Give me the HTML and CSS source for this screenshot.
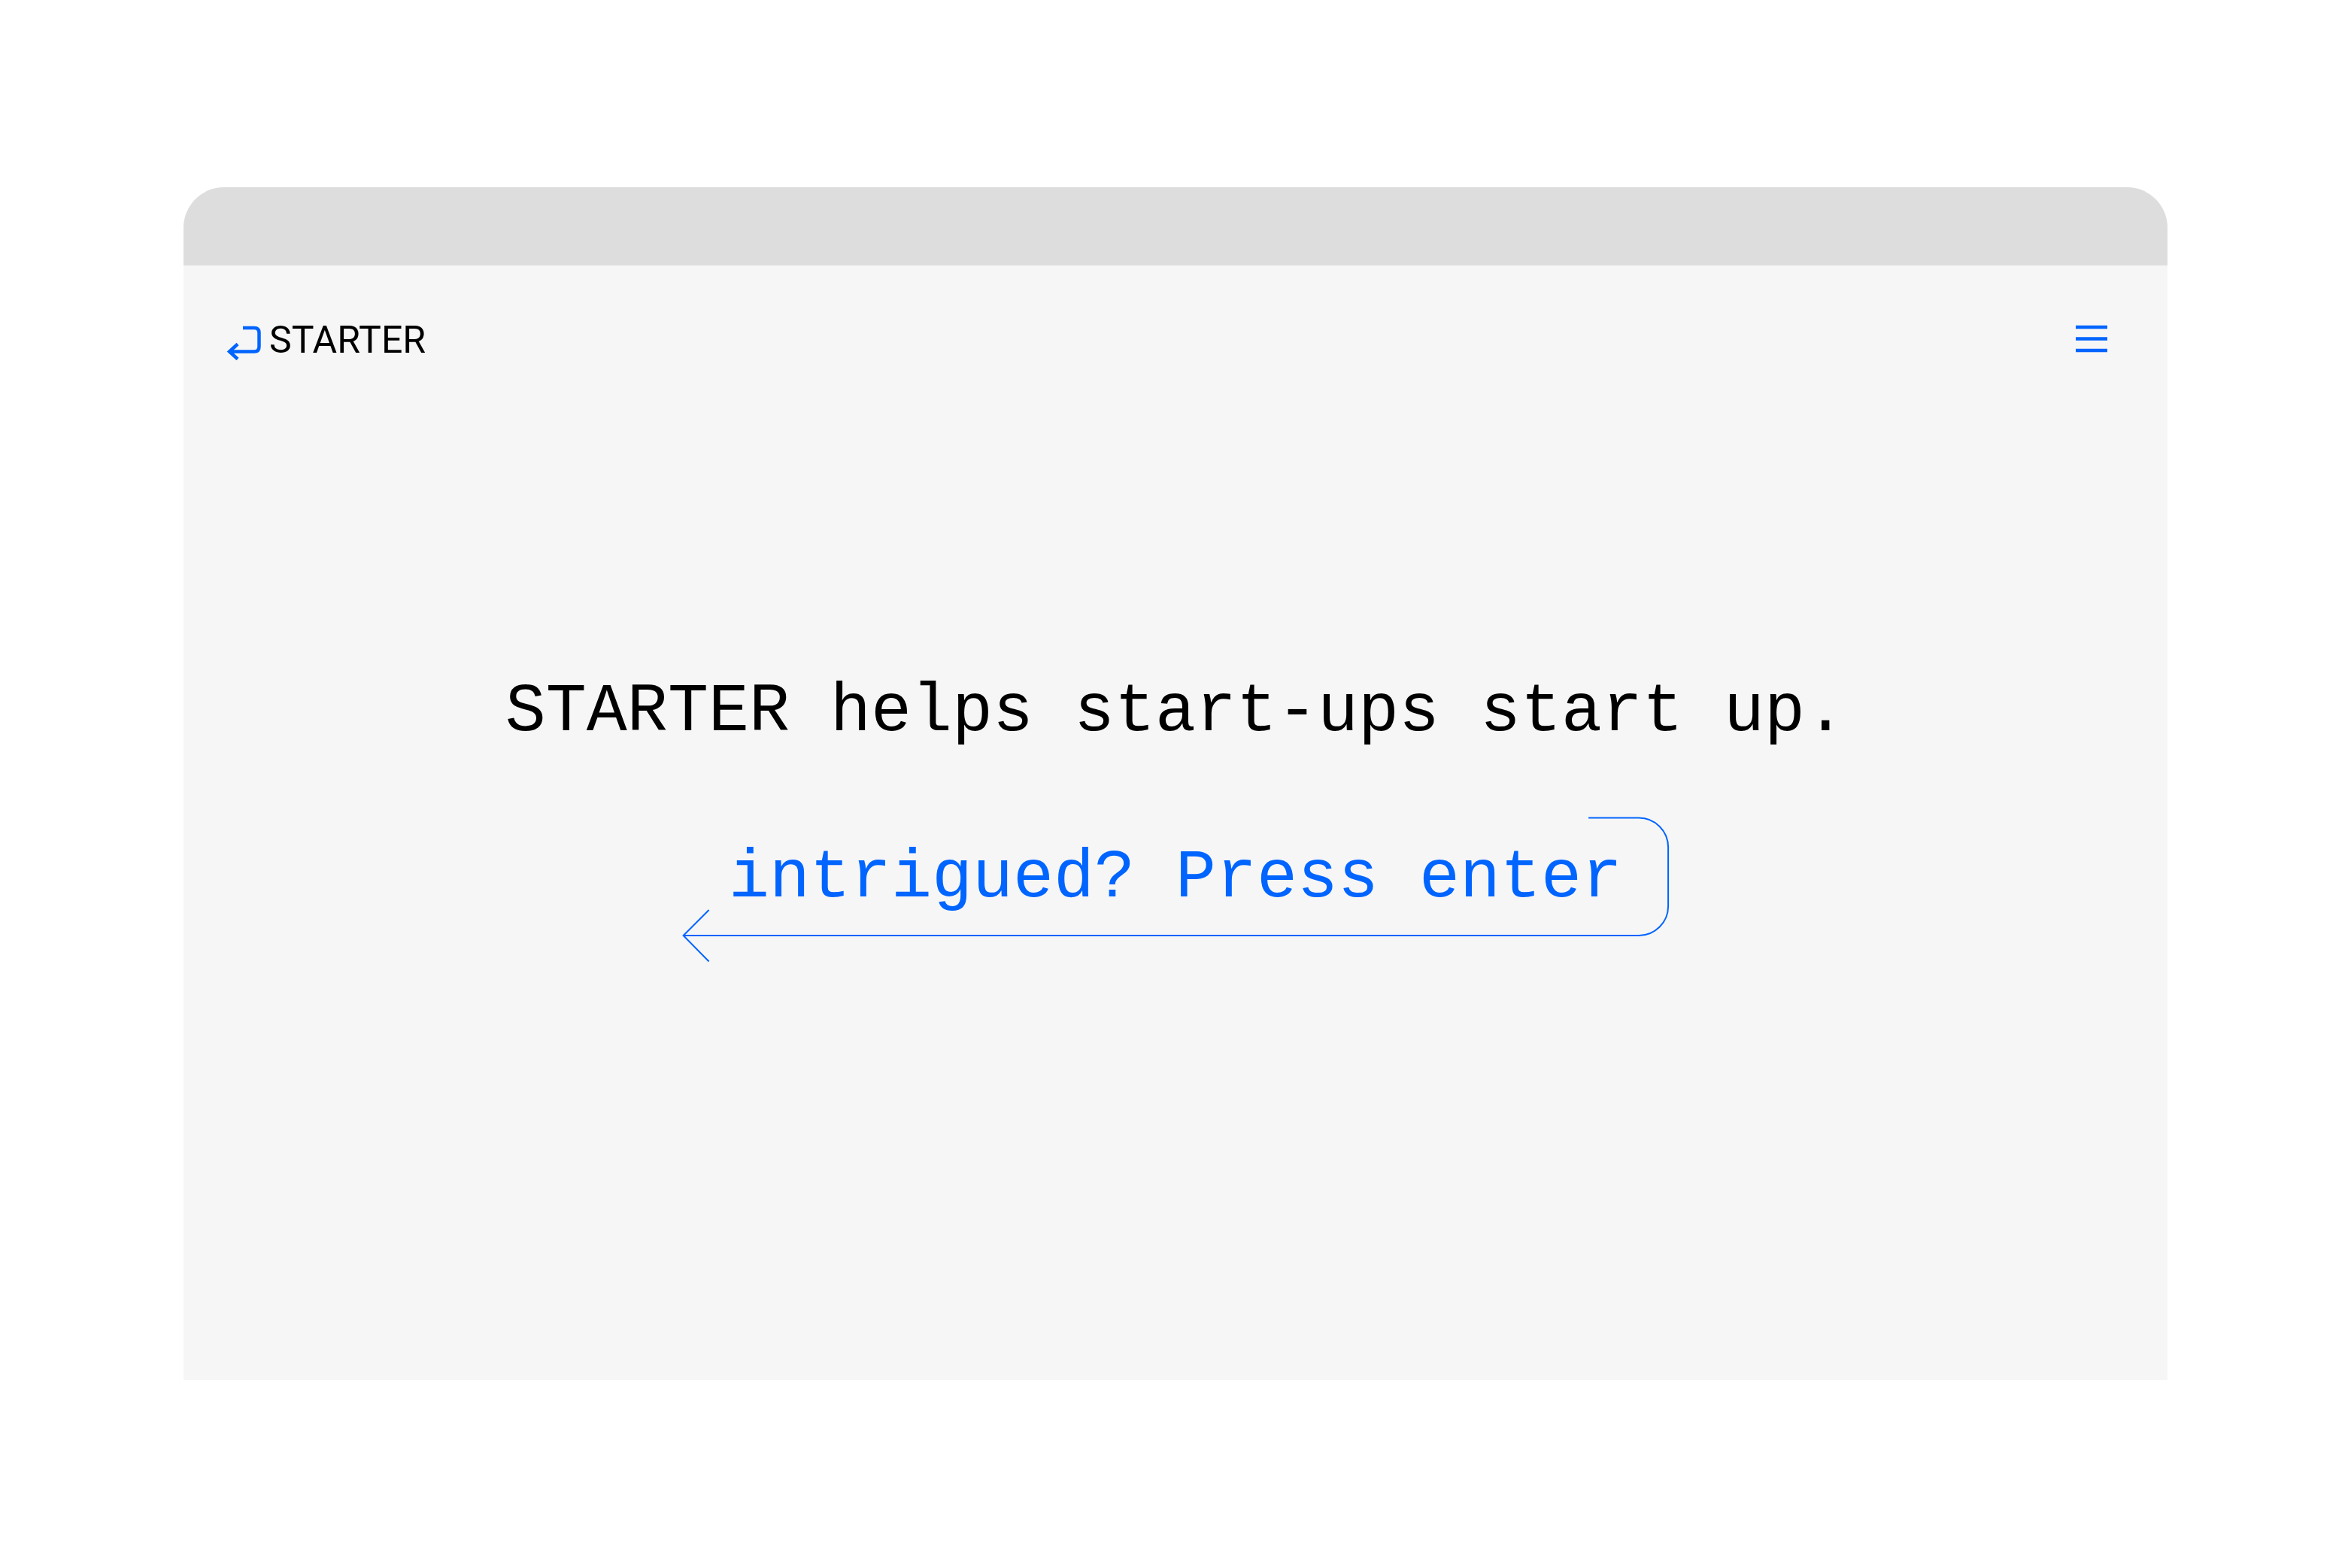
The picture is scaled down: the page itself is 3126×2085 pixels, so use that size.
FILE: index.html
```html
<!DOCTYPE html>
<html lang="en">

<head>
  <meta charset="UTF-8">
  <meta name="viewport" content="width=device-width, initial-scale=1">
  <title>STARTER</title>
  <link rel="stylesheet" href="styles.css">
</head>

<body>
  <div class="browser">
    <div class="browser-bar"></div>
    <header class="header">
      <a class="logo" href="#">
        <svg class="logo-icon" viewBox="0 0 46 48" aria-hidden="true">
          <path d="M21 5H36Q42.500 5 42.500 11.500V30Q42.500 36.500 36 36.500H3M14 26.500L3 36.500L14 46.500" />
        </svg>
        <span>STARTER</span>
      </a>
      <button class="menu" type="button" aria-label="Menu">
        <svg class="menu-icon" viewBox="0 0 42 42" aria-hidden="true">
          <path d="M0 4H42M0 19.500H42M0 35H42" />
        </svg>
      </button>
    </header>
    <main class="hero">
      <h1 class="title">STARTER helps start-ups start up.</h1>
      <button class="enter" type="button">
        <svg class="enter-arrow" viewBox="0 0 1312 192" aria-hidden="true">
          <path d="M1205 1.500H1272A39 39 0 0 1 1311 40.500V119A39 39 0 0 1 1272 158H1.500M35.500 124L1.500 158L35.500 192.500" />
        </svg>
        <span>intrigued? Press enter</span>
      </button>
    </main>
  </div>
</body>

</html>
```
FILE: styles.css
```css
* {
  box-sizing: border-box;
}

body {
  display: flex;
  min-height: 100vh;
  margin: 0;
  padding: 249px 244px 250px;
  background-color: #fff;
  color: #000;
}

.browser {
  display: flex;
  flex: 1;
  flex-direction: column;
  border-radius: 54px 54px 0 0;
  background-color: #f6f6f6;
  overflow: hidden;
}

.browser-bar {
  height: 104px;
  background-color: #ddd;
}

.header {
  display: flex;
  justify-content: space-between;
  align-items: center;
  padding: 69px 80px 0 58px;
}

.logo {
  display: flex;
  align-items: center;
  gap: 10px;
  color: #000;
  font-family: Roboto, sans-serif;
  font-size: 50px;
  line-height: 60px;
  text-decoration: none;
}

.logo-icon {
  width: 46px;
  height: 48px;
  margin-top: 6px;
}

.menu {
  padding: 0;
  border: none;
  background: none;
  cursor: pointer;
}

.menu-icon {
  display: block;
  width: 42px;
  height: 42px;
}

.logo-icon path,
.menu-icon path {
  fill: none;
  stroke: #0064ff;
  stroke-width: 4.5;
}

.hero {
  display: flex;
  flex: 1;
  flex-direction: column;
  align-items: center;
  justify-content: center;
  gap: 87px;
  padding-bottom: 145px;
}

.title,
.enter {
  font-family: "Liberation Mono", monospace;
  font-size: 90px;
  font-weight: normal;
  line-height: 104px;
}

.title {
  margin: 0;
}

.enter {
  position: relative;
  padding: 30px 62px 58px;
  border: none;
  background: none;
  color: #0064ff;
  cursor: pointer;
}

.enter-arrow {
  position: absolute;
  top: 0;
  left: 0;
  width: 100%;
  height: 100%;
  overflow: visible;
}

.enter-arrow path {
  fill: none;
  stroke: #0064ff;
  stroke-width: 2;
}
```
